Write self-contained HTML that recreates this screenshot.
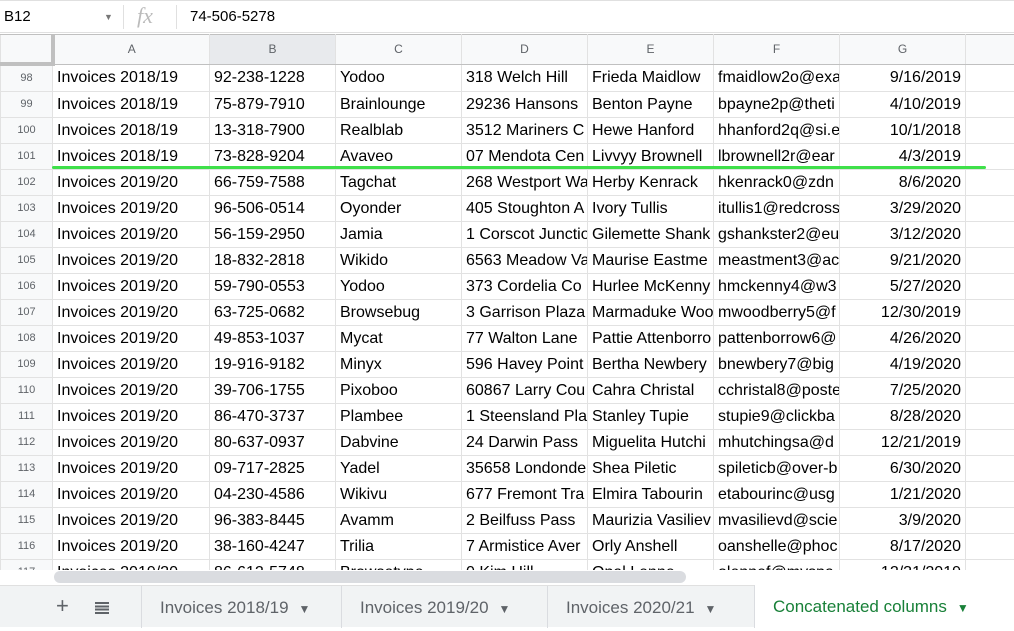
<!DOCTYPE html><html><head><style>
body{margin:0;width:1014px;height:627px;overflow:hidden;background:#fff;font-family:"Liberation Sans",Arial,sans-serif;position:relative}
.fb{position:absolute;left:0;top:0;width:1014px;height:33px;border-bottom:1px solid #e0e0e0;border-top:1px solid #e0e0e0;box-sizing:border-box}
.grid{position:absolute;left:0;top:34px;width:1014px;height:536px;overflow:hidden}
table{border-collapse:collapse;table-layout:fixed;width:1030px}
td{height:25px;border:1px solid #e2e2e2;padding:0 4px;font-size:16px;color:#000;white-space:nowrap;overflow:hidden;text-overflow:clip;line-height:25px}
tr.h td{height:27px;background:#f8f9fa;color:#5f6368;font-size:12px;text-align:center;border-color:#c0c0c0 #e2e2e2 #c0c0c0 #e2e2e2}
td.n{background:#f8f9fa;color:#5f6368;font-size:11px;text-align:center;padding:0}
td.r{text-align:right}
.tabs{position:absolute;left:0;top:585px;width:1014px;height:42px;background:#f1f3f4;border-top:1px solid #e0e0e0;box-sizing:border-box;font-size:17px;color:#5f6368}
.tab{position:absolute;top:0;height:42px;line-height:44px;border-left:1px solid #dadce0;box-sizing:border-box;padding-left:18px}
.tab .a{font-size:12px;margin-left:10px}
</style></head><body>
<div class="fb">
<div style="position:absolute;left:4px;top:7px;font-size:15px">B12</div>
<div style="position:absolute;left:104px;top:11px;font-size:9px;color:#777">▼</div>
<div style="position:absolute;left:123px;top:4px;width:1px;height:24px;background:#e0e0e0"></div>
<div style="position:absolute;left:137px;top:2px;font-size:22px;color:#bbb;font-family:'Liberation Serif',serif;font-style:italic">fx</div>
<div style="position:absolute;left:176px;top:4px;width:1px;height:24px;background:#e0e0e0"></div>
<div style="position:absolute;left:190px;top:7px;font-size:15px">74-506-5278</div>
</div>
<div class="grid"><table>
<colgroup><col style="width:52px"><col style="width:157px"><col style="width:126px"><col style="width:126px"><col style="width:126px"><col style="width:126px"><col style="width:126px"><col style="width:126px"><col style="width:65px"></colgroup>
<tr class="h"><td style="border-right:4px solid #c0c0c0;border-bottom:4px solid #c0c0c0"></td><td>A</td><td style="background:#e8eaed">B</td><td>C</td><td>D</td><td>E</td><td>F</td><td>G</td><td></td></tr>
<tr><td class="n">98</td><td>Invoices 2018/19</td><td>92-238-1228</td><td>Yodoo</td><td>318 Welch Hill</td><td>Frieda Maidlow</td><td>fmaidlow2o@exa</td><td class="r">9/16/2019</td><td></td></tr>
<tr><td class="n">99</td><td>Invoices 2018/19</td><td>75-879-7910</td><td>Brainlounge</td><td>29236 Hansons</td><td>Benton Payne</td><td>bpayne2p@theti</td><td class="r">4/10/2019</td><td></td></tr>
<tr><td class="n">100</td><td>Invoices 2018/19</td><td>13-318-7900</td><td>Realblab</td><td>3512 Mariners C</td><td>Hewe Hanford</td><td>hhanford2q@si.e</td><td class="r">10/1/2018</td><td></td></tr>
<tr><td class="n">101</td><td>Invoices 2018/19</td><td>73-828-9204</td><td>Avaveo</td><td>07 Mendota Cen</td><td>Livvyy Brownell</td><td>lbrownell2r@ear</td><td class="r">4/3/2019</td><td></td></tr>
<tr><td class="n">102</td><td>Invoices 2019/20</td><td>66-759-7588</td><td>Tagchat</td><td>268 Westport Wa</td><td>Herby Kenrack</td><td>hkenrack0@zdn</td><td class="r">8/6/2020</td><td></td></tr>
<tr><td class="n">103</td><td>Invoices 2019/20</td><td>96-506-0514</td><td>Oyonder</td><td>405 Stoughton A</td><td>Ivory Tullis</td><td>itullis1@redcross</td><td class="r">3/29/2020</td><td></td></tr>
<tr><td class="n">104</td><td>Invoices 2019/20</td><td>56-159-2950</td><td>Jamia</td><td>1 Corscot Junctio</td><td>Gilemette Shank</td><td>gshankster2@eu</td><td class="r">3/12/2020</td><td></td></tr>
<tr><td class="n">105</td><td>Invoices 2019/20</td><td>18-832-2818</td><td>Wikido</td><td>6563 Meadow Va</td><td>Maurise Eastme</td><td>meastment3@ac</td><td class="r">9/21/2020</td><td></td></tr>
<tr><td class="n">106</td><td>Invoices 2019/20</td><td>59-790-0553</td><td>Yodoo</td><td>373 Cordelia Co</td><td>Hurlee McKenny</td><td>hmckenny4@w3</td><td class="r">5/27/2020</td><td></td></tr>
<tr><td class="n">107</td><td>Invoices 2019/20</td><td>63-725-0682</td><td>Browsebug</td><td>3 Garrison Plaza</td><td>Marmaduke Woo</td><td>mwoodberry5@f</td><td class="r">12/30/2019</td><td></td></tr>
<tr><td class="n">108</td><td>Invoices 2019/20</td><td>49-853-1037</td><td>Mycat</td><td>77 Walton Lane</td><td>Pattie Attenborro</td><td>pattenborrow6@</td><td class="r">4/26/2020</td><td></td></tr>
<tr><td class="n">109</td><td>Invoices 2019/20</td><td>19-916-9182</td><td>Minyx</td><td>596 Havey Point</td><td>Bertha Newbery</td><td>bnewbery7@big</td><td class="r">4/19/2020</td><td></td></tr>
<tr><td class="n">110</td><td>Invoices 2019/20</td><td>39-706-1755</td><td>Pixoboo</td><td>60867 Larry Cou</td><td>Cahra Christal</td><td>cchristal8@poste</td><td class="r">7/25/2020</td><td></td></tr>
<tr><td class="n">111</td><td>Invoices 2019/20</td><td>86-470-3737</td><td>Plambee</td><td>1 Steensland Pla</td><td>Stanley Tupie</td><td>stupie9@clickba</td><td class="r">8/28/2020</td><td></td></tr>
<tr><td class="n">112</td><td>Invoices 2019/20</td><td>80-637-0937</td><td>Dabvine</td><td>24 Darwin Pass</td><td>Miguelita Hutchi</td><td>mhutchingsa@d</td><td class="r">12/21/2019</td><td></td></tr>
<tr><td class="n">113</td><td>Invoices 2019/20</td><td>09-717-2825</td><td>Yadel</td><td>35658 Londonde</td><td>Shea Piletic</td><td>spileticb@over-b</td><td class="r">6/30/2020</td><td></td></tr>
<tr><td class="n">114</td><td>Invoices 2019/20</td><td>04-230-4586</td><td>Wikivu</td><td>677 Fremont Tra</td><td>Elmira Tabourin</td><td>etabourinc@usg</td><td class="r">1/21/2020</td><td></td></tr>
<tr><td class="n">115</td><td>Invoices 2019/20</td><td>96-383-8445</td><td>Avamm</td><td>2 Beilfuss Pass</td><td>Maurizia Vasiliev</td><td>mvasilievd@scie</td><td class="r">3/9/2020</td><td></td></tr>
<tr><td class="n">116</td><td>Invoices 2019/20</td><td>38-160-4247</td><td>Trilia</td><td>7 Armistice Aver</td><td>Orly Anshell</td><td>oanshelle@phoc</td><td class="r">8/17/2020</td><td></td></tr>
<tr><td class="n">117</td><td>Invoices 2019/20</td><td>86-612-5748</td><td>Browsetype</td><td>0 Kim Hill</td><td>Opal Lenne</td><td>olennef@myspa</td><td class="r">12/31/2019</td><td></td></tr>
</table></div>
<div style="position:absolute;left:52px;top:166px;width:934px;height:3px;background:#3fe04a;border-radius:2px"></div>
<div style="position:absolute;left:0;top:570px;width:1014px;height:15px;background:#fff"></div>
<div style="position:absolute;left:54px;top:571px;width:632px;height:12px;background:#dadce0;border-radius:6px"></div>
<div class="tabs">
<div style="position:absolute;left:56px;top:7px;font-size:22px;color:#5f6368">+</div>
<div style="position:absolute;left:95px;top:16px;width:14px;height:12px;background:repeating-linear-gradient(#5f6368 0 2px,transparent 2px 3.3px)"></div>
<div class="tab" style="left:141px;width:200px">Invoices 2018/19<span class="a">▼</span></div>
<div class="tab" style="left:341px;width:206px">Invoices 2019/20<span class="a">▼</span></div>
<div class="tab" style="left:547px;width:207px">Invoices 2020/21<span class="a">▼</span></div>
<div class="tab" style="left:754px;width:260px;background:#fff;color:#188038;top:-1px;height:43px">Concatenated columns<span class="a" style="color:#188038">▼</span></div>
</div>
</body></html>
